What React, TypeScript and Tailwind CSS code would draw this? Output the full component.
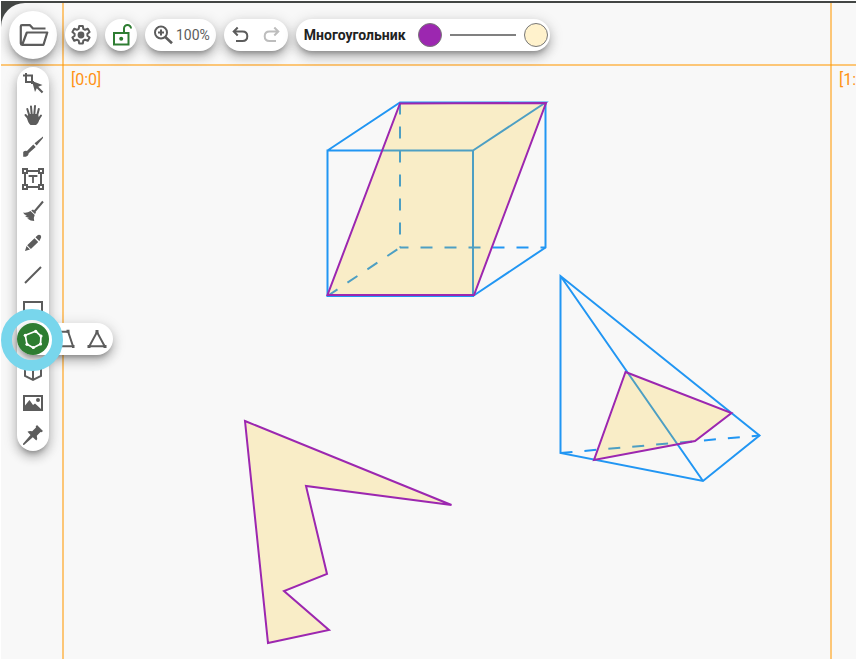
import type { ReactNode } from "react";

const BLUE = "#2196f3";
const PURPLE = "#9c27b0";
const FILL = "rgba(255,193,7,0.2)";

function Icon({ children, size = 24 }: { children: ReactNode; size?: number }) {
  return (
    <svg width={size} height={size} viewBox={`0 0 ${size} ${size}`} fill="none" stroke="currentColor" strokeWidth="2" aria-hidden="true">
      {children}
    </svg>
  );
}

function FolderIcon() {
  return (
    <Icon size={32}>
      <path strokeWidth="2.200" strokeLinejoin="round" d="M28.500 9.500H16l-3-3.300H5q-1.200 0-1.200 1.200V24.500q0 1.300 1.300 1.300H26.500L30.300 13.500H9.800L5.300 25.500" />
    </Icon>
  );
}

function GearIcon() {
  return (
    <Icon>
      <path strokeLinejoin="round" d="M10.200 3h3.600l.5 2.800 1.800 1 2.700-1 1.800 3.100-2.200 1.800v2.100l2.200 1.800-1.800 3.100-2.700-1-1.800 1-.5 2.800h-3.600l-.5-2.800-1.800-1-2.700 1-1.800-3.100 2.200-1.800v-2.100L3.400 8.900l1.800-3.100 2.700 1 1.800-1z" />
      <circle cx="12" cy="12" r="3.400" fill="currentColor" stroke="none" />
    </Icon>
  );
}

function LockIcon() {
  return (
    <Icon>
      <path d="M5 10h14.500v11.500H5zM15 10V5.500a3.500 3.500 0 0 1 7 0" />
      <circle cx="12.200" cy="15.700" r="2" fill="currentColor" stroke="none" />
    </Icon>
  );
}

function ZoomIcon() {
  return (
    <Icon>
      <circle cx="10" cy="9.500" r="6" />
      <path d="M7 9.500h6M10 6.500v6" />
      <path strokeWidth="2.600" d="m14.300 14 6.700 6.300" />
    </Icon>
  );
}

function UndoIcon() {
  return (
    <Icon>
      <path d="M9.700 4.500 5.700 8.500l4 4M6 8.500h8.500q4.800 0 4.800 4.700t-4.800 4.800H8" />
    </Icon>
  );
}

function RedoIcon() {
  return (
    <Icon>
      <path d="m14.300 4.500 4 4-4 4M18 8.500H9.500q-4.800 0-4.800 4.700t4.800 4.800H16" />
    </Icon>
  );
}

function SelectIcon() {
  return (
    <Icon>
      <path d="M5 2v9h8M2 4.500h9V13" />
      <path fill="currentColor" stroke="none" d="m11 10 10.500 4-4.200 1.800 5 5-1.500 1.500-5-5-1.800 3.700z" />
    </Icon>
  );
}

function HandIcon() {
  return (
    <Icon>
      <path strokeLinecap="round" d="m8.300 12.500-2-6.500M10.700 11.500 10 3.500M13.300 11.500 14 3M16 13l1.800-7M8 16 4.500 12M17 17l3-4.500" />
      <path fill="currentColor" stroke="none" d="M7.200 11h9.600l1.700 5q-1 4.500-3.500 6H9.500Q7 20 6 15z" />
    </Icon>
  );
}

function BrushIcon() {
  return (
    <Icon>
      <path fill="currentColor" stroke="none" d="m22 1.500-8.500 6.800 2.200 2.200 6.300-7.500zM12.300 9.500l2.400 2.400-7 6.300Q7.500 22 2.200 21.800V18q-.5-1.800 2.800-2.200l.9.300z" />
    </Icon>
  );
}

function TextIcon() {
  return (
    <Icon>
      <path d="M6 4h12M6 20h12M4 6v12M20 6v12M2 2h4v4H2zM18 2h4v4h-4zM2 18h4v4H2zM18 18h4v4h-4z" />
      <path strokeWidth="1.800" d="M8.500 10V9h7v1M12 9v7" />
    </Icon>
  );
}

function BroomIcon() {
  return (
    <Icon>
      <path d="m22 2.500-8.500 10" />
      <path fill="currentColor" stroke="none" d="m12 10.500 3 3-1 1.500-3.800-3.500zM2 13.500q4 1 7.500-1.500l4.200 4q-1.200 2-.5 6-3.500 0-7-2.500l2-.5q-2.500-.3-4.200-2l2-.5q-2.800-.7-4-3z" />
    </Icon>
  );
}

function PencilIcon() {
  return (
    <Icon>
      <path fill="currentColor" stroke="none" d="m4 20 1.500-5 3.500 3.500zM6.200 14.200l7.300-7 3.700 3.700-7.300 7zM14.500 6.300l1.200-1.200 3.700 3.700-1.200 1.200z" />
      <circle cx="18" cy="6" r="2.200" fill="currentColor" stroke="none" />
    </Icon>
  );
}

function LineIcon() {
  return (
    <Icon>
      <path d="M4 20 20 4" />
    </Icon>
  );
}

function RectIcon() {
  return (
    <Icon>
      <path d="M3 7h18v11H3z" />
    </Icon>
  );
}

function PolygonIcon() {
  return (
    <Icon>
      <path d="m4.300 8.300 10.400-4L20 9l-.5 8-7.200 3.700L6 17.300z" strokeWidth="1.700" />
      <g fill="currentColor" stroke="none">
        <circle cx="14.700" cy="4.300" r="1.600" />
        <circle cx="20" cy="9" r="1.600" />
        <circle cx="19.500" cy="17" r="1.600" />
        <circle cx="12.300" cy="20.500" r="1.600" />
        <circle cx="6" cy="17.300" r="1.600" />
        <circle cx="4.300" cy="8.300" r="1.600" />
      </g>
    </Icon>
  );
}

function CubeIcon() {
  return (
    <Icon>
      <path d="m12 3 8 4v10l-8 4-8-4V7zM4 7l8 4 8-4M12 11v10" />
    </Icon>
  );
}

function ImageIcon() {
  return (
    <Icon>
      <path d="M3 5h18v14H3z" />
      <circle cx="17" cy="9" r="2" fill="currentColor" stroke="none" />
      <path fill="currentColor" stroke="none" d="M4 18v-3.500L8.500 9l3.500 5 2-1.500 6 5.500z" />
    </Icon>
  );
}

function PinIcon() {
  return (
    <Icon>
      <path fill="currentColor" stroke="none" d="m16 2 6 6-1.500 1.200-1-.2-3.700 3.700q1 3.200-.5 4.800l-3.500-3.300L3 22l-1-.3v-1l7.500-8.800-3-3.200q2-1.300 4.700-.4L15 4.600l-.3-1.200z" />
    </Icon>
  );
}

function TrapezoidIcon() {
  return (
    <Icon>
      <path d="M3 19.300h18M7 4.700h8M4 19.300l3-14.600M15 4.300l5 15" />
      <path stroke="none" fill="currentColor" d="M13.500 2.700h3v3h-3zM19 18h2.500v3H19zM2 18h2.500v3H2z" />
    </Icon>
  );
}

function TriangleIcon() {
  return (
    <Icon>
      <path d="M4.300 19.300h15.400L12 5z" />
      <path stroke="none" fill="currentColor" d="M10.500 3h3v3.500h-3zM2.500 18h3v3h-3zM18.500 18h3v3h-3z" />
    </Icon>
  );
}

const tools = [
  { name: "Выделение", icon: <SelectIcon /> },
  { name: "Перемещение", icon: <HandIcon /> },
  { name: "Кисть", icon: <BrushIcon /> },
  { name: "Текст", icon: <TextIcon /> },
  { name: "Очистить", icon: <BroomIcon /> },
  { name: "Карандаш", icon: <PencilIcon /> },
  { name: "Линия", icon: <LineIcon /> },
  { name: "Прямоугольник", icon: <RectIcon /> },
  { name: "Многоугольник", icon: <PolygonIcon />, active: true },
  { name: "Объёмные фигуры", icon: <CubeIcon /> },
  { name: "Изображение", icon: <ImageIcon /> },
  { name: "Закрепить", icon: <PinIcon /> },
];

const shadow = "shadow-[0_5px_5px_-3px_rgba(0,0,0,0.28),0_6px_10px_1px_rgba(0,0,0,0.16),0_3px_14px_2px_rgba(0,0,0,0.12)]";
const round = `flex shrink-0 items-center justify-center rounded-full bg-white ${shadow}`;

function Drawing() {
  return (
    <svg className="absolute top-0 left-0" width="1200" height="1000" fill="none" strokeWidth="2" aria-hidden="true">
      <g stroke="rgba(255,152,0,0.52)">
        <path d="M62 0V1000" />
        <path d="M830 0V1000" />
        <path d="M0 62H1200" />
      </g>
      <g fill="#ff9214" fontFamily="Roboto, sans-serif" fontSize="16">
        <text x="70" y="82">[0:0]</text>
        <text x="838" y="82">[1:0]</text>
      </g>
      <g transform="translate(-1 -3)" stroke={BLUE}>
        <path d="M327.500 150.500h145.500v145.500H327.500zM327.500 150.500 400 102.500h145.500L473 150.500M545.500 102.500v145L473 296" />
        <path strokeDasharray="12 12" d="M400 102.500v145M327.500 296 400 247.500" />
        <path strokeDasharray="12 12" d="M545.500 247.500H400" strokeDashoffset="7" />
        <path d="M560.500 276v177L703 481 759.500 435.500zM560.500 276 703 481" />
        <path strokeDasharray="12 12" d="M560.500 453 759.500 435.500" />
      </g>
      <g transform="translate(-1 -3)" stroke={PURPLE} fill={FILL}>
        <path d="M400 103.500 546 103 474 295H327.500z" />
        <path d="M625.500 372 731.500 413 695 441 594 460z" />
        <path d="M245 421 451.500 505 306 486 327 574 284 591 329 630 268 643z" />
      </g>
    </svg>
  );
}

export default function App() {
  return (
    <div className="h-screen overflow-hidden bg-white pt-px pr-1 pb-0.5 pl-px font-[Roboto,sans-serif]">
      <div className="h-full bg-[#434644] pt-0.5">
        <main className="relative isolate h-full overflow-hidden rounded-tl-3xl bg-[#f8f8f8] text-[#5c5c5c]">
          <Drawing />
          <header className="relative flex items-center gap-2 px-2 pt-2">
            <button aria-label="Открыть" className={`${round} size-12`}><FolderIcon /></button>
            <button aria-label="Настройки" className={`${round} size-8`}><GearIcon /></button>
            <button aria-label="Блокировка" className={`${round} size-8 text-[#2e7d32]`}><LockIcon /></button>
            <button className={`${round} h-8 gap-px px-1.5 text-sm`}>
              <ZoomIcon />
              100%
            </button>
            <div className={`${round} h-8`}>
              <button aria-label="Отменить" className="flex size-8 items-center justify-center"><UndoIcon /></button>
              <button aria-label="Повторить" disabled className="flex size-8 items-center justify-center text-[#bdbdbd]"><RedoIcon /></button>
            </div>
            <div className={`${round} h-8 px-0.5`}>
              <span className="mr-3 ml-1.5 text-sm font-bold text-[#222]">Многоугольник</span>
              <button aria-label="Цвет линии" className="size-6 rounded-full border border-[#777] bg-[#9c27b0]" />
              <button aria-label="Толщина линии" className="flex h-8 w-[82px] items-center px-2"><span className="h-0.5 w-full bg-[#808080]" /></button>
              <button aria-label="Цвет заливки" className="size-6 rounded-full border border-[#777] bg-[#fff2cc]" />
            </div>
          </header>
          <nav aria-label="Инструменты" className={`relative mt-2 ml-4 flex w-8 flex-col rounded-full bg-white ${shadow}`}>
            {tools.map((tool) => (
              <div key={tool.name} className="relative size-8">
                {tool.active && (
                  <>
                    <div className={`absolute top-0 left-0 flex rounded-full bg-white pl-8 ${shadow}`}>
                      <button aria-label="Трапеция" className="flex size-8 items-center justify-center"><TrapezoidIcon /></button>
                      <button aria-label="Треугольник" className="flex size-8 items-center justify-center"><TriangleIcon /></button>
                    </div>
                    <span className="pointer-events-none absolute -top-3.5 -left-4 z-10 size-[62px] rounded-full border-[11px] border-[#78d6ec]" />
                  </>
                )}
                <button
                  aria-label={tool.name}
                  className={tool.active ? "relative flex size-8 items-center justify-center rounded-full bg-[#2e7d32] text-white" : "flex size-8 items-center justify-center"}
                >
                  {tool.icon}
                </button>
              </div>
            ))}
          </nav>
        </main>
      </div>
    </div>
  );
}
